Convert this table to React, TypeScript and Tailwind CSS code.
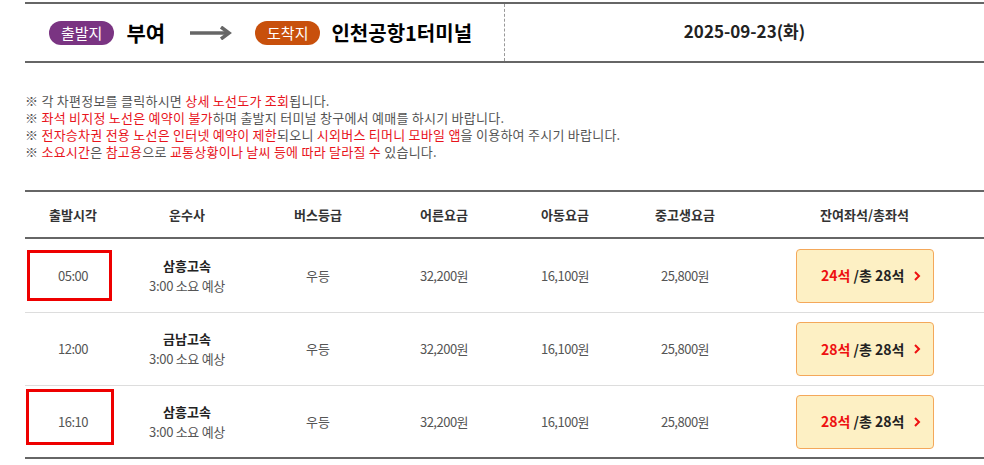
import React from 'react';

const rows = [
  { time: '05:00', company: '삼흥고속', left: '24석', mark: true, h: 'h-[74px]' },
  { time: '12:00', company: '금남고속', left: '28석', mark: false, h: 'h-[73px]' },
  { time: '16:10', company: '삼흥고속', left: '28석', mark: true, h: 'h-[71px]' },
];

const cols = ['w-[96px]', 'w-[132px]', 'w-[130px]', 'w-[122px]', 'w-[120px]', 'w-[120px]', 'flex-1'];

const App: React.FC = () => {
  return (
    <div className="w-[984px] h-[465px] overflow-hidden bg-white pl-[25px] pt-[2px] font-['Noto_Sans_CJK_KR',sans-serif] text-[#333]">
      {/* route header */}
      <div className="flex h-[61px] border-t-2 border-b-2 border-[#666]">
        <div className="flex w-[480px] items-center pl-[24px] border-r border-dashed border-[#999]">
          <span className="rounded-full bg-[#7a3482] px-[12px] h-[24px] leading-[24px] text-[15px] text-white">출발지</span>
          <span className="ml-[12px] text-[21px] font-bold text-black">부여</span>
          <svg className="ml-[25px]" width="42" height="14" viewBox="0 0 42 14">
            <path d="M0 7H38" stroke="#666" strokeWidth="3.5" />
            <path d="M31 1L39 7L31 13" fill="none" stroke="#666" strokeWidth="3.5" />
          </svg>
          <span className="ml-[23px] rounded-full bg-[#c8500c] px-[12px] h-[24px] leading-[24px] text-[15px] text-white">도착지</span>
          <span className="ml-[11px] text-[20px] font-bold text-black">인천공항1터미널</span>
        </div>
        <div className="flex flex-1 items-center justify-center pb-[4px] text-[17px] font-bold text-[#222]">2025-09-23(화)</div>
      </div>

      {/* notices */}
      <div className="mt-[29px] text-[13px] leading-[17px] tracking-[0.25px] text-[#555]">
        <p>※ 각 차편정보를 클릭하시면 <span className="text-[#e8141c]">상세 노선도가 조회</span>됩니다.</p>
        <p>※ <span className="text-[#e8141c]">좌석 비지정 노선은 예약이 불가</span>하며 출발지 터미널 창구에서 예매를 하시기 바랍니다.</p>
        <p>※ <span className="text-[#e8141c]">전자승차권 전용 노선은 인터넷 예약이 제한</span>되오니 <span className="text-[#e8141c]">시외버스 티머니 모바일 앱</span>을 이용하여 주시기 바랍니다.</p>
        <p>※ <span className="text-[#e8141c]">소요시간</span>은 <span className="text-[#e8141c]">참고용</span>으로 <span className="text-[#e8141c]">교통상황이나 날씨 등에 따라 달라질 수</span> 있습니다.</p>
      </div>

      {/* table */}
      <div className="mt-[30px] border-t-2 border-b-2 border-[#666]">
        <div className="flex h-[47px] items-center border-b-2 border-[#666] text-[13px] font-semibold text-[#333]">
          {['출발시각', '운수사', '버스등급', '어른요금', '아동요금', '중고생요금', '잔여좌석/총좌석'].map((h, i) => (
            <div key={h} className={`${cols[i]} text-center`}>{h}</div>
          ))}
        </div>
        {rows.map((r, idx) => (
          <div key={idx} className={`relative flex ${r.h} items-center text-[13px] text-[#555] ${idx < 2 ? 'border-b border-[#ddd]' : ''}`}>
            <div className="w-[96px] text-center tracking-[-0.5px]">{r.time}</div>
            <div className="w-[132px] text-center leading-[20px]">
              <div className="font-bold text-[#222]">{r.company}</div>
              <div className="tracking-[-0.3px]">3:00 소요 예상</div>
            </div>
            <div className="w-[130px] text-center">우등</div>
            <div className="w-[122px] text-center tracking-[-0.5px]">32,200원</div>
            <div className="w-[120px] text-center tracking-[-0.5px]">16,100원</div>
            <div className="w-[120px] text-center tracking-[-0.5px]">25,800원</div>
            <div className="flex flex-1 justify-center">
              <button className="flex h-[54px] w-[138px] items-center justify-end gap-[8px] rounded-[4px] border border-[#f4a85a] bg-[#fdf0c4] pr-[12px] text-[14px] font-bold text-[#222]">
                <span><span className="text-[#ee1111]">{r.left}</span> /총 28석</span>
                <svg width="8" height="12" viewBox="0 0 8 12">
                  <path d="M2 2L6 6L2 10" fill="none" stroke="#ee1111" strokeWidth="2" />
                </svg>
              </button>
            </div>
            {r.mark && (
              <div className={`absolute ${idx === 0 ? 'left-[2px] top-[11px] h-[51px] w-[85px]' : 'left-[1px] top-[3px] h-[56px] w-[88px]'} border-[3px] border-[#ee0000]`} />
            )}
          </div>
        ))}
      </div>
    </div>
  );
};

export default App;
